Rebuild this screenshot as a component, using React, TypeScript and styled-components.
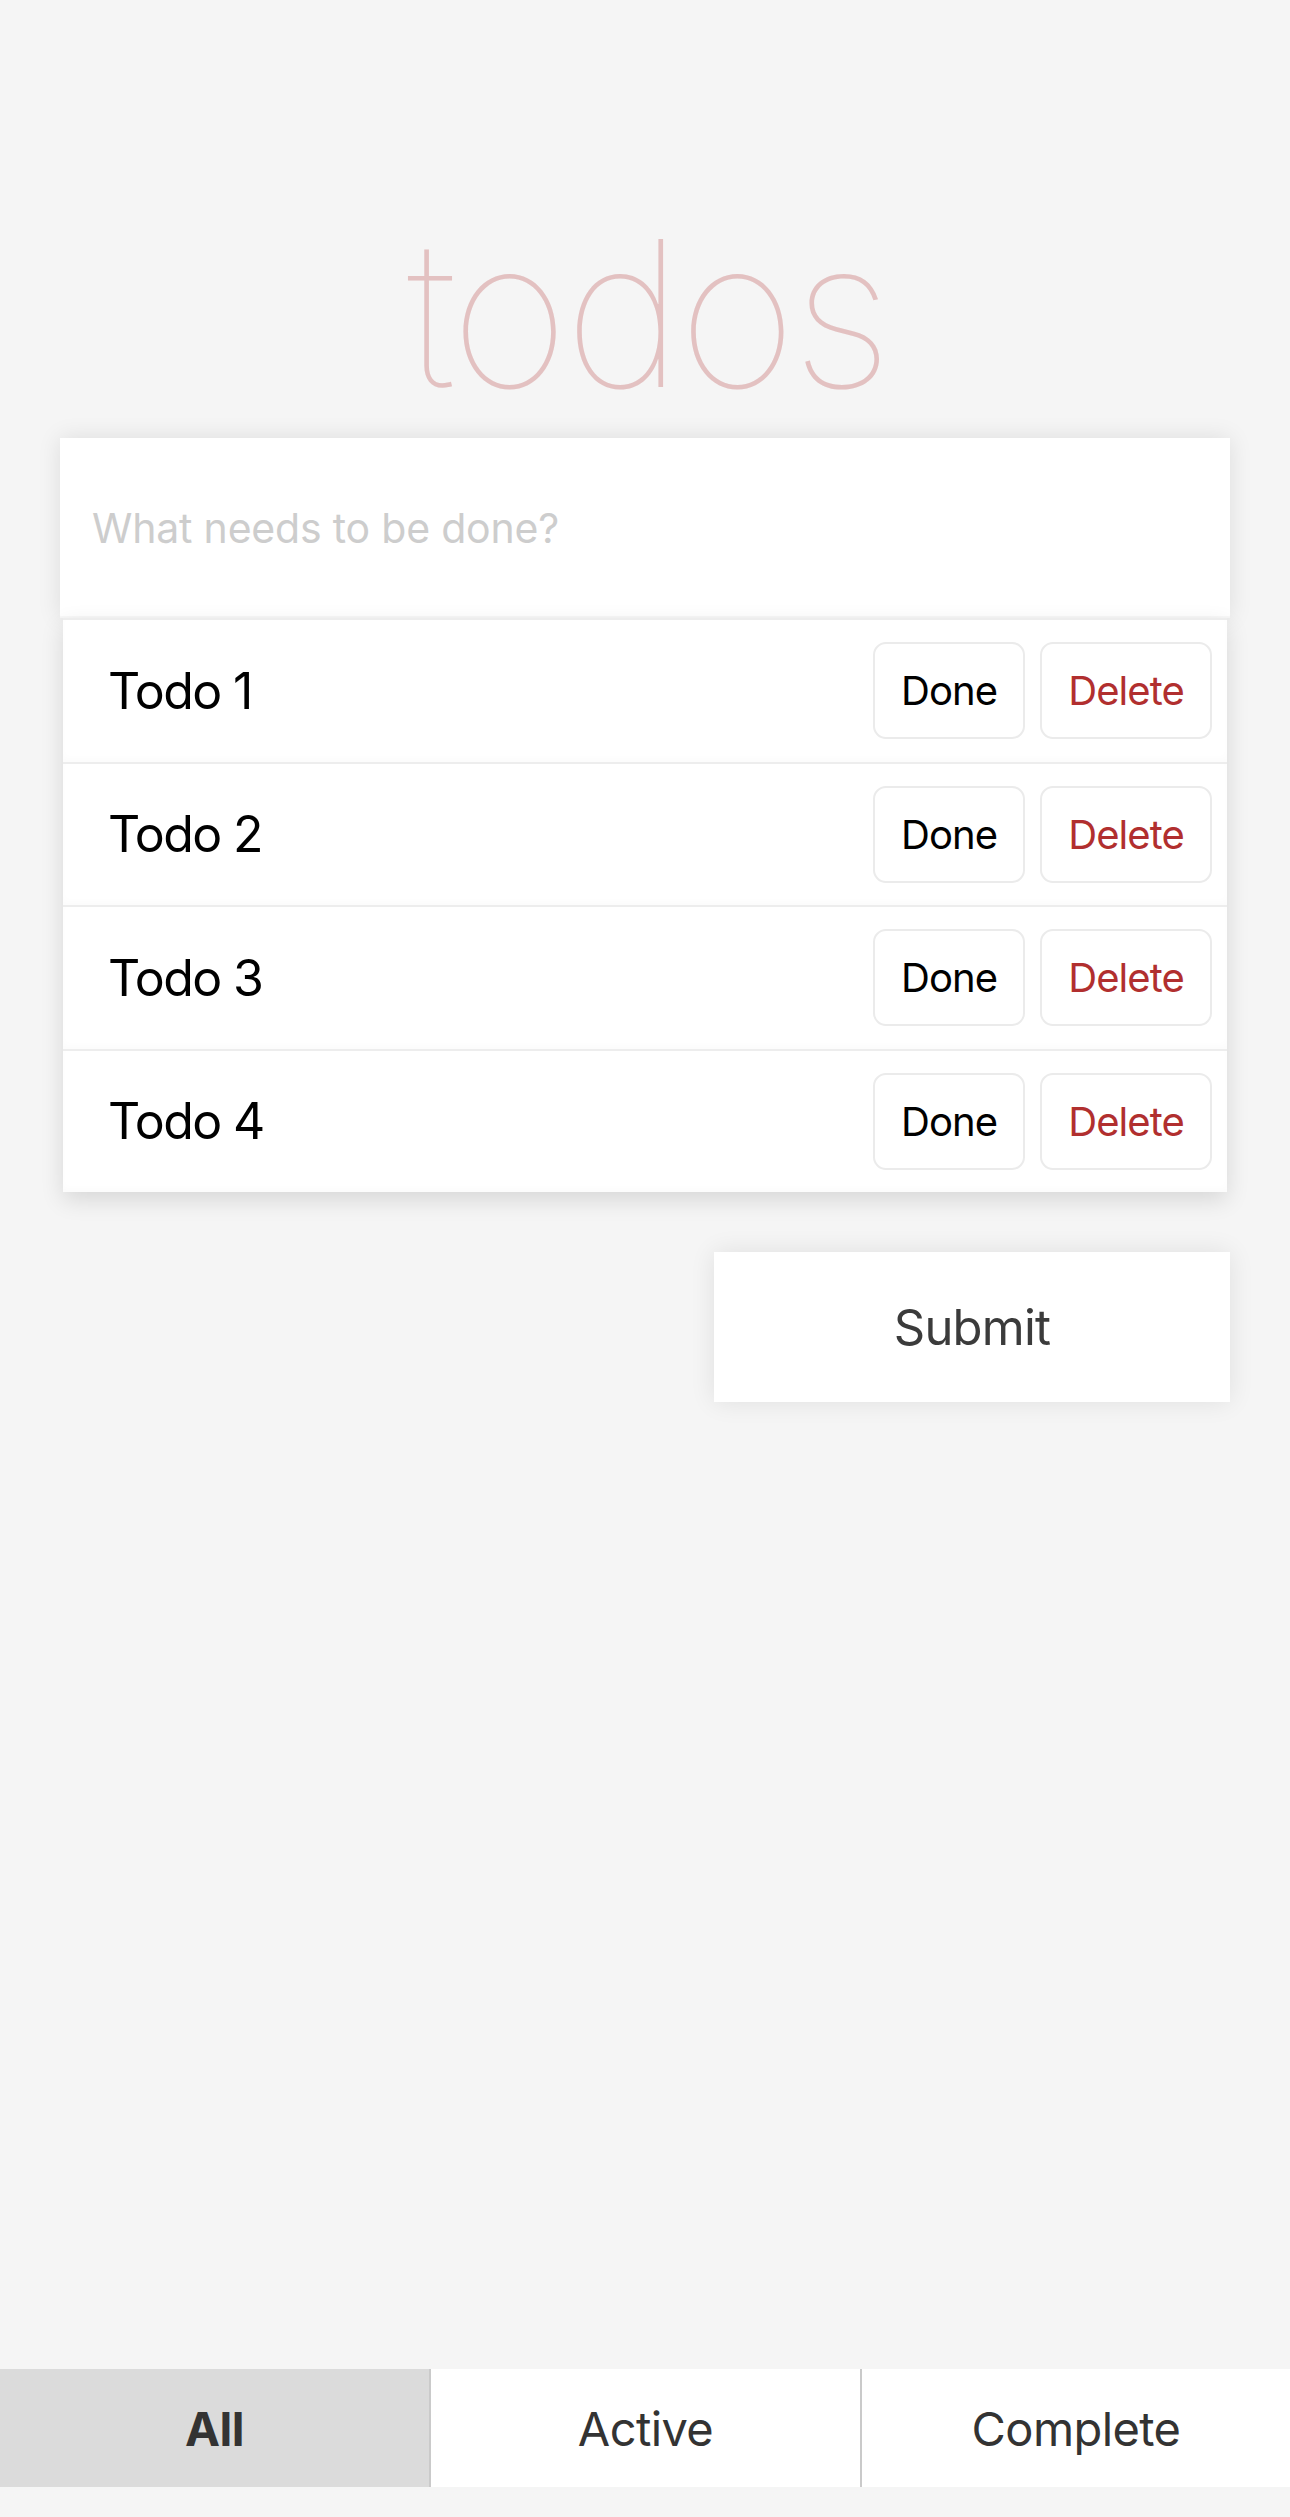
import React from "react";
import styled, { createGlobalStyle } from "styled-components";

const GlobalStyle = createGlobalStyle`
  html, body { margin: 0; padding: 0; background: #f5f5f5; }
  body { font-family: Inter, "Noto Sans", "Liberation Sans", sans-serif; -webkit-font-smoothing: antialiased; }
  * { box-sizing: border-box; }
`;

const Page = styled.div`
  min-height: 2517px;
  display: flex;
  flex-direction: column;
  background: #f5f5f5;
`;

const Main = styled.main`
  width: 1170px;
  margin: 0 auto;
  display: flex;
  flex-direction: column;
`;

const Title = styled.h1`
  margin: 211px 0 23px;
  height: 204px;
  padding-left: 5px;
  font-family: Inter, "Helvetica Neue", sans-serif;
  font-weight: 100;
  font-size: 204px;
  line-height: 1;
  text-align: center;
  letter-spacing: -4.5px;
  color: #e3c1c1;
`;

const NewTodo = styled.input`
  display: block;
  width: 100%;
  height: 180px;
  padding: 0 32px;
  border: none;
  outline: none;
  background: #fff;
  font-family: Inter, sans-serif;
  font-size: 41px;
  letter-spacing: -0.2px;
  color: #333;
  box-shadow: 0 0 22px rgba(0, 0, 0, 0.1), inset 0 -2px 1px rgba(0, 0, 0, 0.03);
  &::placeholder { color: #cdcdcd; }
`;

const List = styled.ul`
  list-style: none;
  margin: 0 3px;
  padding: 0;
  background: #fff;
  box-shadow: 0 8px 22px rgba(0, 0, 0, 0.12);
`;

const Row = styled.li`
  height: 143.5px;
  display: flex;
  align-items: center;
  padding: 0 15px 0 45px;
  border-top: 2.5px solid #ededed;
  box-shadow: inset 0 -4px 6px rgba(0, 0, 0, 0.015);
`;

const Label = styled.span`
  flex: 1;
  font-size: 50px;
  letter-spacing: -1.6px;
  color: #000;
`;

const Actions = styled.div`
  display: flex;
  gap: 15px;
`;

const SmallButton = styled.button<{ $danger?: boolean }>`
  height: 97px;
  padding: 0 26px;
  border: 2.5px solid #ebebeb;
  border-radius: 13px;
  background: #fff;
  font-family: Inter, sans-serif;
  font-size: 40px;
  letter-spacing: -0.9px;
  color: ${(p) => (p.$danger ? "#b12f2f" : "#000")};
`;

const SubmitRow = styled.div`
  display: flex;
  justify-content: flex-end;
  margin-top: 60px;
`;

const SubmitButton = styled.button`
  width: 516px;
  height: 150px;
  border: none;
  background: #fff;
  font-family: Inter, sans-serif;
  font-size: 49px;
  letter-spacing: -0.8px;
  color: #3b3b3b;
  box-shadow: 0 0 24px rgba(0, 0, 0, 0.09);
`;

const Footer = styled.nav`
  margin-top: auto;
  margin-bottom: 30px;
  height: 118px;
  display: grid;
  grid-template-columns: 429px 2px 429px 2px 1fr;
`;

const Tab = styled.button<{ $active?: boolean }>`
  border: none;
  background: ${(p) => (p.$active ? "#dbdbdb" : "#fff")};
  font-family: Inter, sans-serif;
  font-size: 47px;
  letter-spacing: -0.6px;
  font-weight: ${(p) => (p.$active ? 700 : 400)};
  color: #333;
`;

const Divider = styled.span`
  background: #cacaca;
`;

const todos = ["Todo 1", "Todo 2", "Todo 3", "Todo 4"];

export default function App() {
  return (
    <>
      <GlobalStyle />
      <Page>
        <Main>
          <Title>todos</Title>
          <NewTodo placeholder="What needs to be done?" />
          <List>
            {todos.map((t) => (
              <Row key={t}>
                <Label>{t}</Label>
                <Actions>
                  <SmallButton>Done</SmallButton>
                  <SmallButton $danger>Delete</SmallButton>
                </Actions>
              </Row>
            ))}
          </List>
          <SubmitRow>
            <SubmitButton>Submit</SubmitButton>
          </SubmitRow>
        </Main>
        <Footer>
          <Tab $active>All</Tab>
          <Divider />
          <Tab>Active</Tab>
          <Divider />
          <Tab>Complete</Tab>
        </Footer>
      </Page>
    </>
  );
}
